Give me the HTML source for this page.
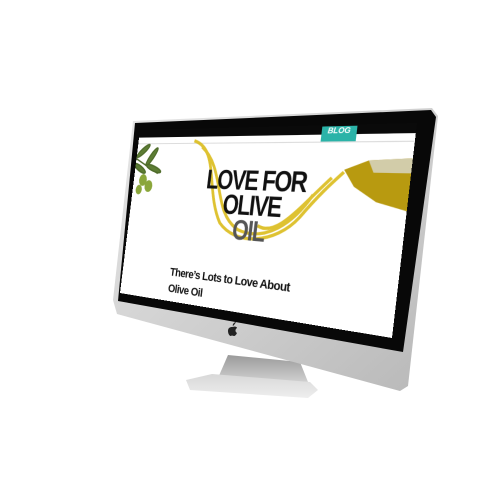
<!DOCTYPE html>
<html><head><style>
html,body{margin:0;padding:0;background:#fff;width:500px;height:500px;overflow:hidden;position:relative;font-family:"Liberation Sans",sans-serif}
svg.m{position:absolute;left:0;top:0}
#scr{position:absolute;left:0;top:0;width:280px;height:170px;background:#fff;overflow:hidden;transform-origin:0 0;
transform:matrix3d(0.63025,-0.13089,0,-0.00086096,-0.12031,0.95232,0,-0.000022206,0,0,1,0,140,130,0,1)}
.hdr{position:absolute;left:0;top:0;width:280px;height:8px;background:#0a0a0a}
.t{position:absolute;font-weight:bold;color:#111;white-space:nowrap}
</style></head><body>
<svg class="m" width="500" height="500">
<defs>
<linearGradient id="sv" x1="0" y1="0" x2="1" y2="1"><stop offset="0" stop-color="#e8e8e8"/><stop offset="1" stop-color="#b8b8b8"/></linearGradient>
<linearGradient id="ft" x1="0" y1="0" x2="0" y2="1"><stop offset="0" stop-color="#d8d8d8"/><stop offset="1" stop-color="#eeeeee"/></linearGradient>
<linearGradient id="nk" x1="0" y1="0" x2="0" y2="1"><stop offset="0" stop-color="#9a9a9a"/><stop offset="1" stop-color="#d0d0d0"/></linearGradient>
</defs>
<polygon points="228,355 300,362 308,382 218,378" fill="url(#nk)"/>
<polygon points="212,374 310,382 318,390 308,398 190,390 186,380" fill="url(#ft)"/>
<polygon points="133,121 432,108 438,116 408,386 400,391 117,314 113,300" fill="url(#sv)"/>
<polygon points="135,123 431,110 436,117 403,352 118,301" fill="#080808"/>
<path d="M233 326c-1-1 1-4 3-4-1 2-2 3-3 4zm-1 1c2 0 3-1 4 0 1 0 1 1 1 1-2 1-2 4 0 5-1 2-2 3-3 3-1 0-2-1-3 0-2 0-3-3-3-5 0-3 2-4 4-4z" fill="#222"/>
</svg>
<div id="scr">
<div class="hdr"></div>
<div style="position:absolute;left:0;top:8px;width:280px;height:6px;border-bottom:1px solid #ddd"></div>
<div style="position:absolute;left:201px;top:1px;width:31px;height:13px;background:#2bb3a8;color:#fff;font:bold italic 7px 'Liberation Sans',sans-serif;text-align:center;line-height:10px">BLOG</div>
<svg style="position:absolute;left:0;top:0" width="280" height="170">
<g stroke="#4e6b2a" stroke-width="1.5" fill="#5d7d34">
<path d="M0 30 L30 45" fill="none"/>
<ellipse cx="8" cy="22" rx="10" ry="2.5" transform="rotate(-40 8 22)"/>
<ellipse cx="20" cy="28" rx="11" ry="2.5" transform="rotate(-55 20 28)"/>
<ellipse cx="24" cy="40" rx="10" ry="2.5" transform="rotate(20 24 40)"/>
<ellipse cx="6" cy="40" rx="9" ry="2.5" transform="rotate(30 6 40)"/>
</g>
<g fill="#8aa63a"><ellipse cx="12" cy="52" rx="5" ry="6"/><ellipse cx="20" cy="58" rx="5" ry="6"/><ellipse cx="8" cy="62" rx="4" ry="5"/></g>
<g fill="none" stroke="#d9b80e" stroke-width="3" opacity="0.85">
<path d="M70 12 C100 20 90 60 110 90 C130 110 170 105 190 80 C205 60 215 50 225 40"/>
<path d="M80 18 C110 40 100 80 130 95 C160 105 185 85 200 60"/>
<path d="M150 90 C170 100 190 70 215 45"/>
</g>
<path d="M225 38 L245 30 L280 28 L280 70 L255 64 L235 52 Z" fill="#b89a10"/>
<path d="M245 30 L280 28 L280 40 L250 40 Z" fill="#d8d8d0" opacity="0.8"/>
</svg>
<div class="t" style="left:80px;top:38px;font-size:26px;line-height:23px;letter-spacing:-1.5px;text-align:center;width:122px;transform:scaleX(0.85);transform-origin:50% 0">LOVE FOR<br>OLIVE<br><span style="color:#555">OIL</span></div>
<div class="t" style="left:60px;top:134px;font-size:11px;line-height:16px;letter-spacing:-0.5px">There’s Lots to Love About<br>Olive Oil</div>
</div>
</body></html>
